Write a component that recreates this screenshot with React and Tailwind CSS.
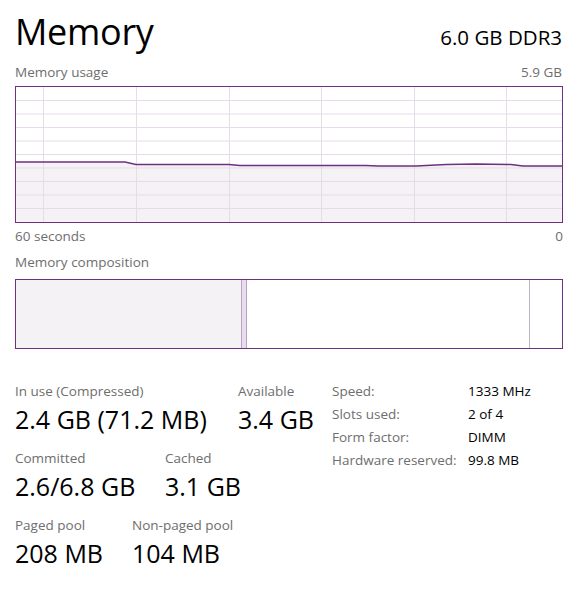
import React from "react";

const font = { fontFamily: '"Open Sans", "Noto Sans", sans-serif' };

function UsageChart() {
  const W = 546;
  const H = 135;
  const pts = [
    [0, 75], [109, 75], [120, 77.5], [213, 77.5], [224, 78.5], [350, 78.5],
    [362, 79], [400, 79], [430, 77.5], [460, 77], [495, 77.5], [507, 79], [546, 79],
  ];
  const line = pts.map((p, i) => (i === 0 ? "M" : "L") + p[0] + " " + p[1]).join(" ");
  const area = line + ` L ${W} ${H} L 0 ${H} Z`;
  const hs = [1, 2, 3, 4, 5, 6, 7, 8, 9].map((k) => k * 13.5);
  const vs = [27, 120, 213, 305, 398, 490];
  return (
    <div className="w-[548px] h-[137px] border border-[#70307f] bg-white">
      <svg width={W} height={H} viewBox={`0 0 ${W} ${H}`} className="block">
        <path d={area} fill="#f4f2f5" />
        {hs.map((y) => (
          <line key={"h" + y} x1="0" x2={W} y1={y} y2={y} stroke="#e6dbe8" strokeWidth="1" />
        ))}
        {vs.map((x) => (
          <line key={"v" + x} x1={x + 0.5} x2={x + 0.5} y1="0" y2={H} stroke="#e6dbe8" strokeWidth="1" />
        ))}
        <path d={line} fill="none" stroke="#70307f" strokeWidth="1.3" />
      </svg>
    </div>
  );
}

function Stat({ label, value, w }) {
  return (
    <div className={w}>
      <div className="text-[13.5px] leading-[18px] text-[#6e6e6e]">{label}</div>
      <div className="text-[25px] leading-[32px] text-black mt-[3px]">{value}</div>
    </div>
  );
}

export default function App() {
  return (
    <div className="w-[587px] h-[593px] bg-white pl-[15px] pr-[25px] pt-[8px]" style={font}>
      <div className="flex justify-between items-baseline">
        <div className="text-[36px] leading-[48px] text-black tracking-[-0.3px]">Memory</div>
        <div className="text-[20.5px] leading-[24px] text-black">6.0 GB DDR3</div>
      </div>
      <div className="flex justify-between text-[13.5px] leading-[18px] text-[#6e6e6e] mt-[7px]">
        <span>Memory usage</span>
        <span>5.9 GB</span>
      </div>
      <div className="mt-[5px]">
        <UsageChart />
      </div>
      <div className="flex justify-between text-[13.5px] leading-[18px] text-[#6e6e6e] mt-[4px] w-[548px]">
        <span>60 seconds</span>
        <span>0</span>
      </div>
      <div className="text-[13.5px] leading-[18px] text-[#6e6e6e] mt-[8px]">Memory composition</div>
      <div className="mt-[8px] w-[548px] h-[70px] border border-[#70307f] flex">
        <div className="w-[225px] bg-[#f4f2f5]" />
        <div className="w-[6px] bg-[#e8dcee] border-x border-[#b8a4c0]" />
        <div className="w-[283px] bg-white border-r border-[#bfb3c3]" />
        <div className="flex-1 bg-white" />
      </div>

      <div className="flex items-start mt-[33px]">
        <div className="w-[317px] flex flex-col gap-[14px]">
          <div className="flex">
            <Stat w="w-[223px]" label="In use (Compressed)" value="2.4 GB (71.2 MB)" />
            <Stat w="" label="Available" value="3.4 GB" />
          </div>
          <div className="flex">
            <Stat w="w-[150px]" label="Committed" value="2.6/6.8 GB" />
            <Stat w="" label="Cached" value="3.1 GB" />
          </div>
          <div className="flex">
            <Stat w="w-[117px]" label="Paged pool" value="208 MB" />
            <Stat w="" label="Non-paged pool" value="104 MB" />
          </div>
        </div>
        <div className="grid grid-cols-[136px_auto] gap-y-[5px] text-[13.5px] leading-[18px]">
          <span className="text-[#6e6e6e]">Speed:</span>
          <span className="text-black">1333 MHz</span>
          <span className="text-[#6e6e6e]">Slots used:</span>
          <span className="text-black">2 of 4</span>
          <span className="text-[#6e6e6e]">Form factor:</span>
          <span className="text-black">DIMM</span>
          <span className="text-[#6e6e6e]">Hardware reserved:</span>
          <span className="text-black">99.8 MB</span>
        </div>
      </div>
    </div>
  );
}
